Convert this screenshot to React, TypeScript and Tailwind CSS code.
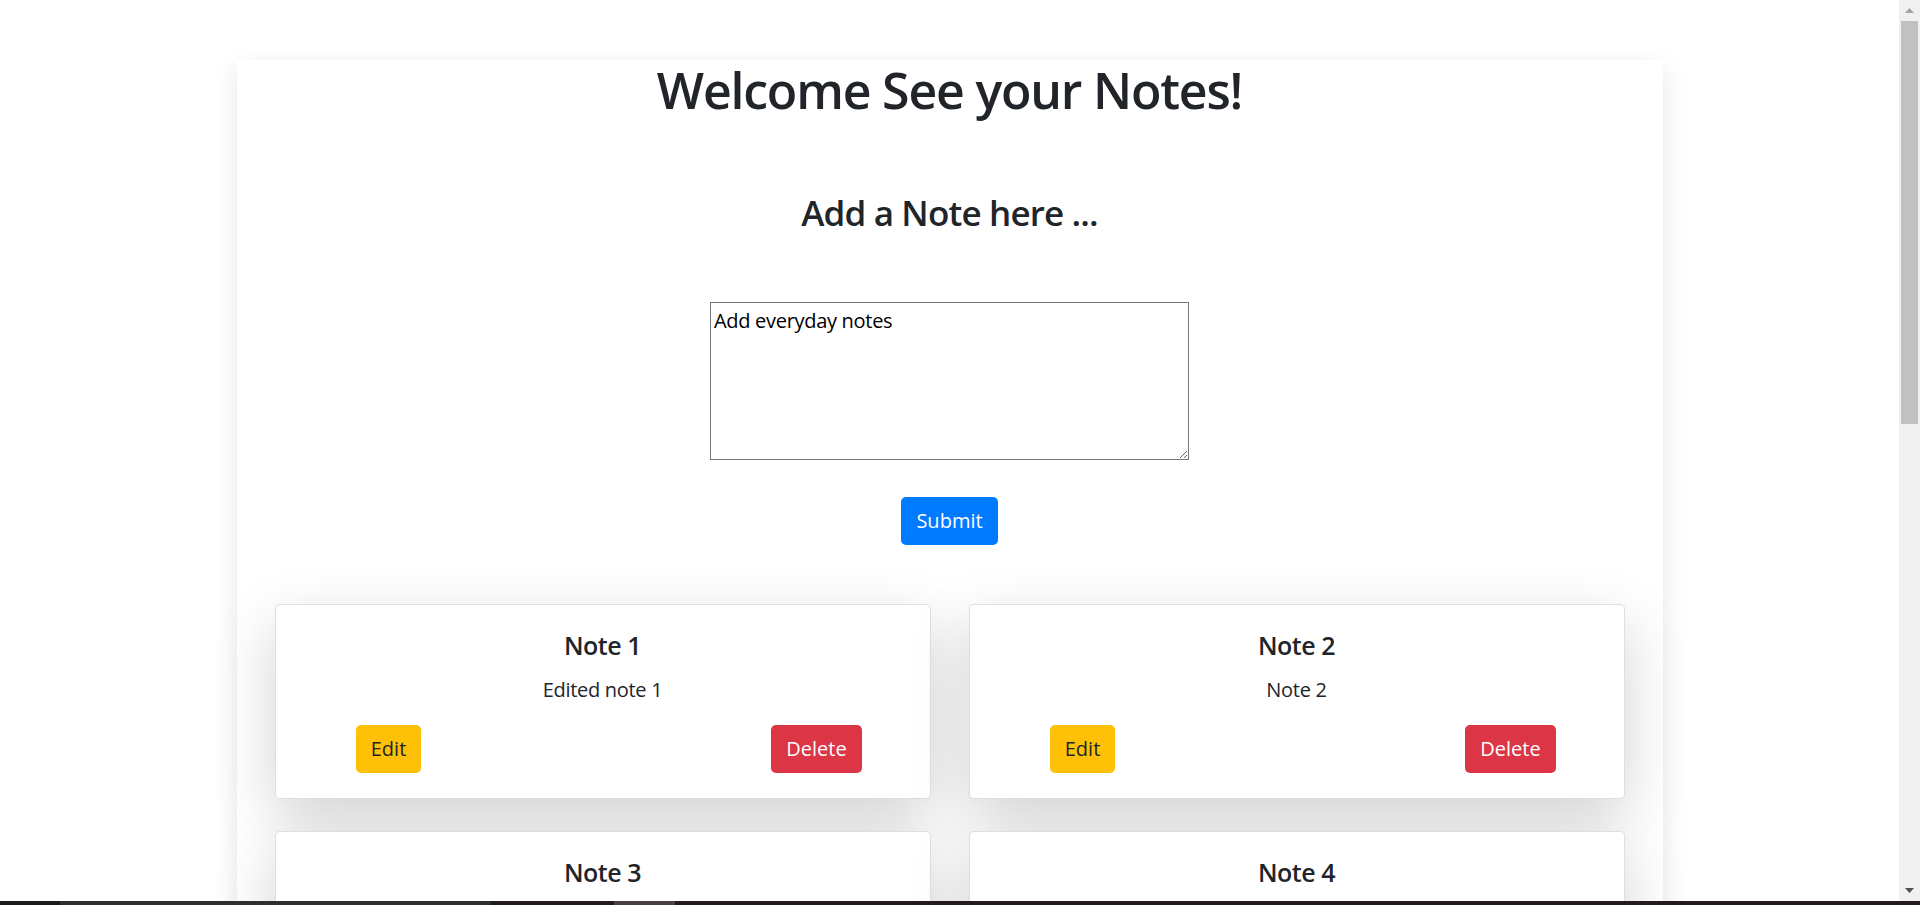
import { useState } from 'react'

interface Note {
  id: number
  title: string
  body: string
}

const initialNotes: Note[] = [
  { id: 1, title: 'Note 1', body: 'Edited note 1' },
  { id: 2, title: 'Note 2', body: 'Note 2' },
  { id: 3, title: 'Note 3', body: 'Note 3' },
  { id: 4, title: 'Note 4', body: 'Note 4' },
  { id: 5, title: 'Note 5', body: 'Note 5' },
  { id: 6, title: 'Note 6', body: 'Note 6' },
  { id: 7, title: 'Note 7', body: 'Note 7' },
  { id: 8, title: 'Note 8', body: 'Note 8' },
  { id: 9, title: 'Note 9', body: 'Note 9' },
  { id: 10, title: 'Note 10', body: 'Note 10' }
]

function NoteCard({ note, onDelete }: { note: Note; onDelete: (id: number) => void }) {
  return (
    <div className="rounded-[5px] border border-black/[0.125] bg-white p-[25px] text-center shadow-[0_20px_60px_rgba(0,0,0,0.175)]">
      <h5 className="mb-[15px] text-[25px] leading-[30px] font-semibold tracking-[-0.5px] text-[#212529]">{note.title}</h5>
      <p className="mb-[20px] text-[20px] leading-[30px] tracking-[-0.3px] text-[#212529]">{note.body}</p>
      <div className="flex justify-between">
        <div className="flex w-[176px] justify-center">
          <button className="h-[48px] rounded-[5px] bg-[#ffc107] px-[15px] text-[20px] text-[#212529]">
            Edit
          </button>
        </div>
        <div className="flex w-[176px] justify-center">
          <button
            onClick={() => onDelete(note.id)}
            className="h-[48px] rounded-[5px] bg-[#dc3545] px-[15px] text-[20px] text-white"
          >
            Delete
          </button>
        </div>
      </div>
    </div>
  )
}

function FakeScrollbar() {
  return (
    <div className="sticky top-0 flex h-[901px] w-[21px] shrink-0 flex-col bg-[#f0f0f0]">
      <div className="flex h-[21px] items-center justify-center">
        <svg width="9" height="5" viewBox="0 0 9 5">
          <path d="M0 5 L4.5 0 L9 5 Z" fill="#a3a3a3" />
        </svg>
      </div>
      <div className="mx-[2px] h-[403px] bg-[#c1c1c1]" />
      <div className="flex-1" />
      <div className="flex h-[21px] items-center justify-center">
        <svg width="9" height="5" viewBox="0 0 9 5">
          <path d="M0 0 L9 0 L4.5 5 Z" fill="#505050" />
        </svg>
      </div>
    </div>
  )
}

export default function App() {
  const [notes, setNotes] = useState<Note[]>(initialNotes)
  const [text, setText] = useState('Add everyday notes')

  const handleDelete = (id: number) => {
    setNotes(prev => prev.filter(n => n.id !== id))
  }

  return (
    <div className="flex items-start bg-white font-['Open_Sans',sans-serif] text-[#212529]">
      <div className="min-w-0 flex-1 pt-[60px] pb-[30px]">
        <div className="mx-auto w-[1426px] bg-white pb-[30px] shadow-[0_8px_24px_rgba(0,0,0,0.1)]">
          <h1 className="text-center text-[50px] leading-[60px] font-semibold tracking-[-1.2px]">Welcome See your Notes!</h1>
          <h3 className="mt-[72px] text-center text-[35px] leading-[42px] font-semibold tracking-[-0.85px]">Add a Note here ...</h3>

          <div className="mt-[68px] flex justify-center">
            <textarea
              value={text}
              onChange={e => setText(e.target.value)}
              className="h-[158px] w-[479px] border border-[#767676] px-[3px] pt-[5px] pb-[2px] text-[20px] leading-[26px] tracking-[-0.3px] text-black"
            />
          </div>

          <div className="mt-[37px] flex justify-center">
            <button className="h-[48px] rounded-[5px] bg-[#007bff] px-[15px] text-[20px] text-white">Submit</button>
          </div>

          <div className="mt-[59px] grid grid-cols-2 gap-x-[38px] gap-y-[32px] px-[38px]">
            {notes.map(note => (
              <NoteCard key={note.id} note={note} onDelete={handleDelete} />
            ))}
          </div>
        </div>
      </div>
      <FakeScrollbar />

      {/* taskbar edge peeking in at the bottom of the screenshot */}
      <div className="fixed inset-x-0 bottom-0 flex h-[4px] bg-[#241c1a]">
        <div className="w-[60px] bg-[#1a1a1a]" />
        <div className="w-[430px] bg-[#2e2e2e]" />
        <div className="w-[124px]" />
        <div className="w-[61px] bg-[#4a4242]" />
      </div>
    </div>
  )
}
